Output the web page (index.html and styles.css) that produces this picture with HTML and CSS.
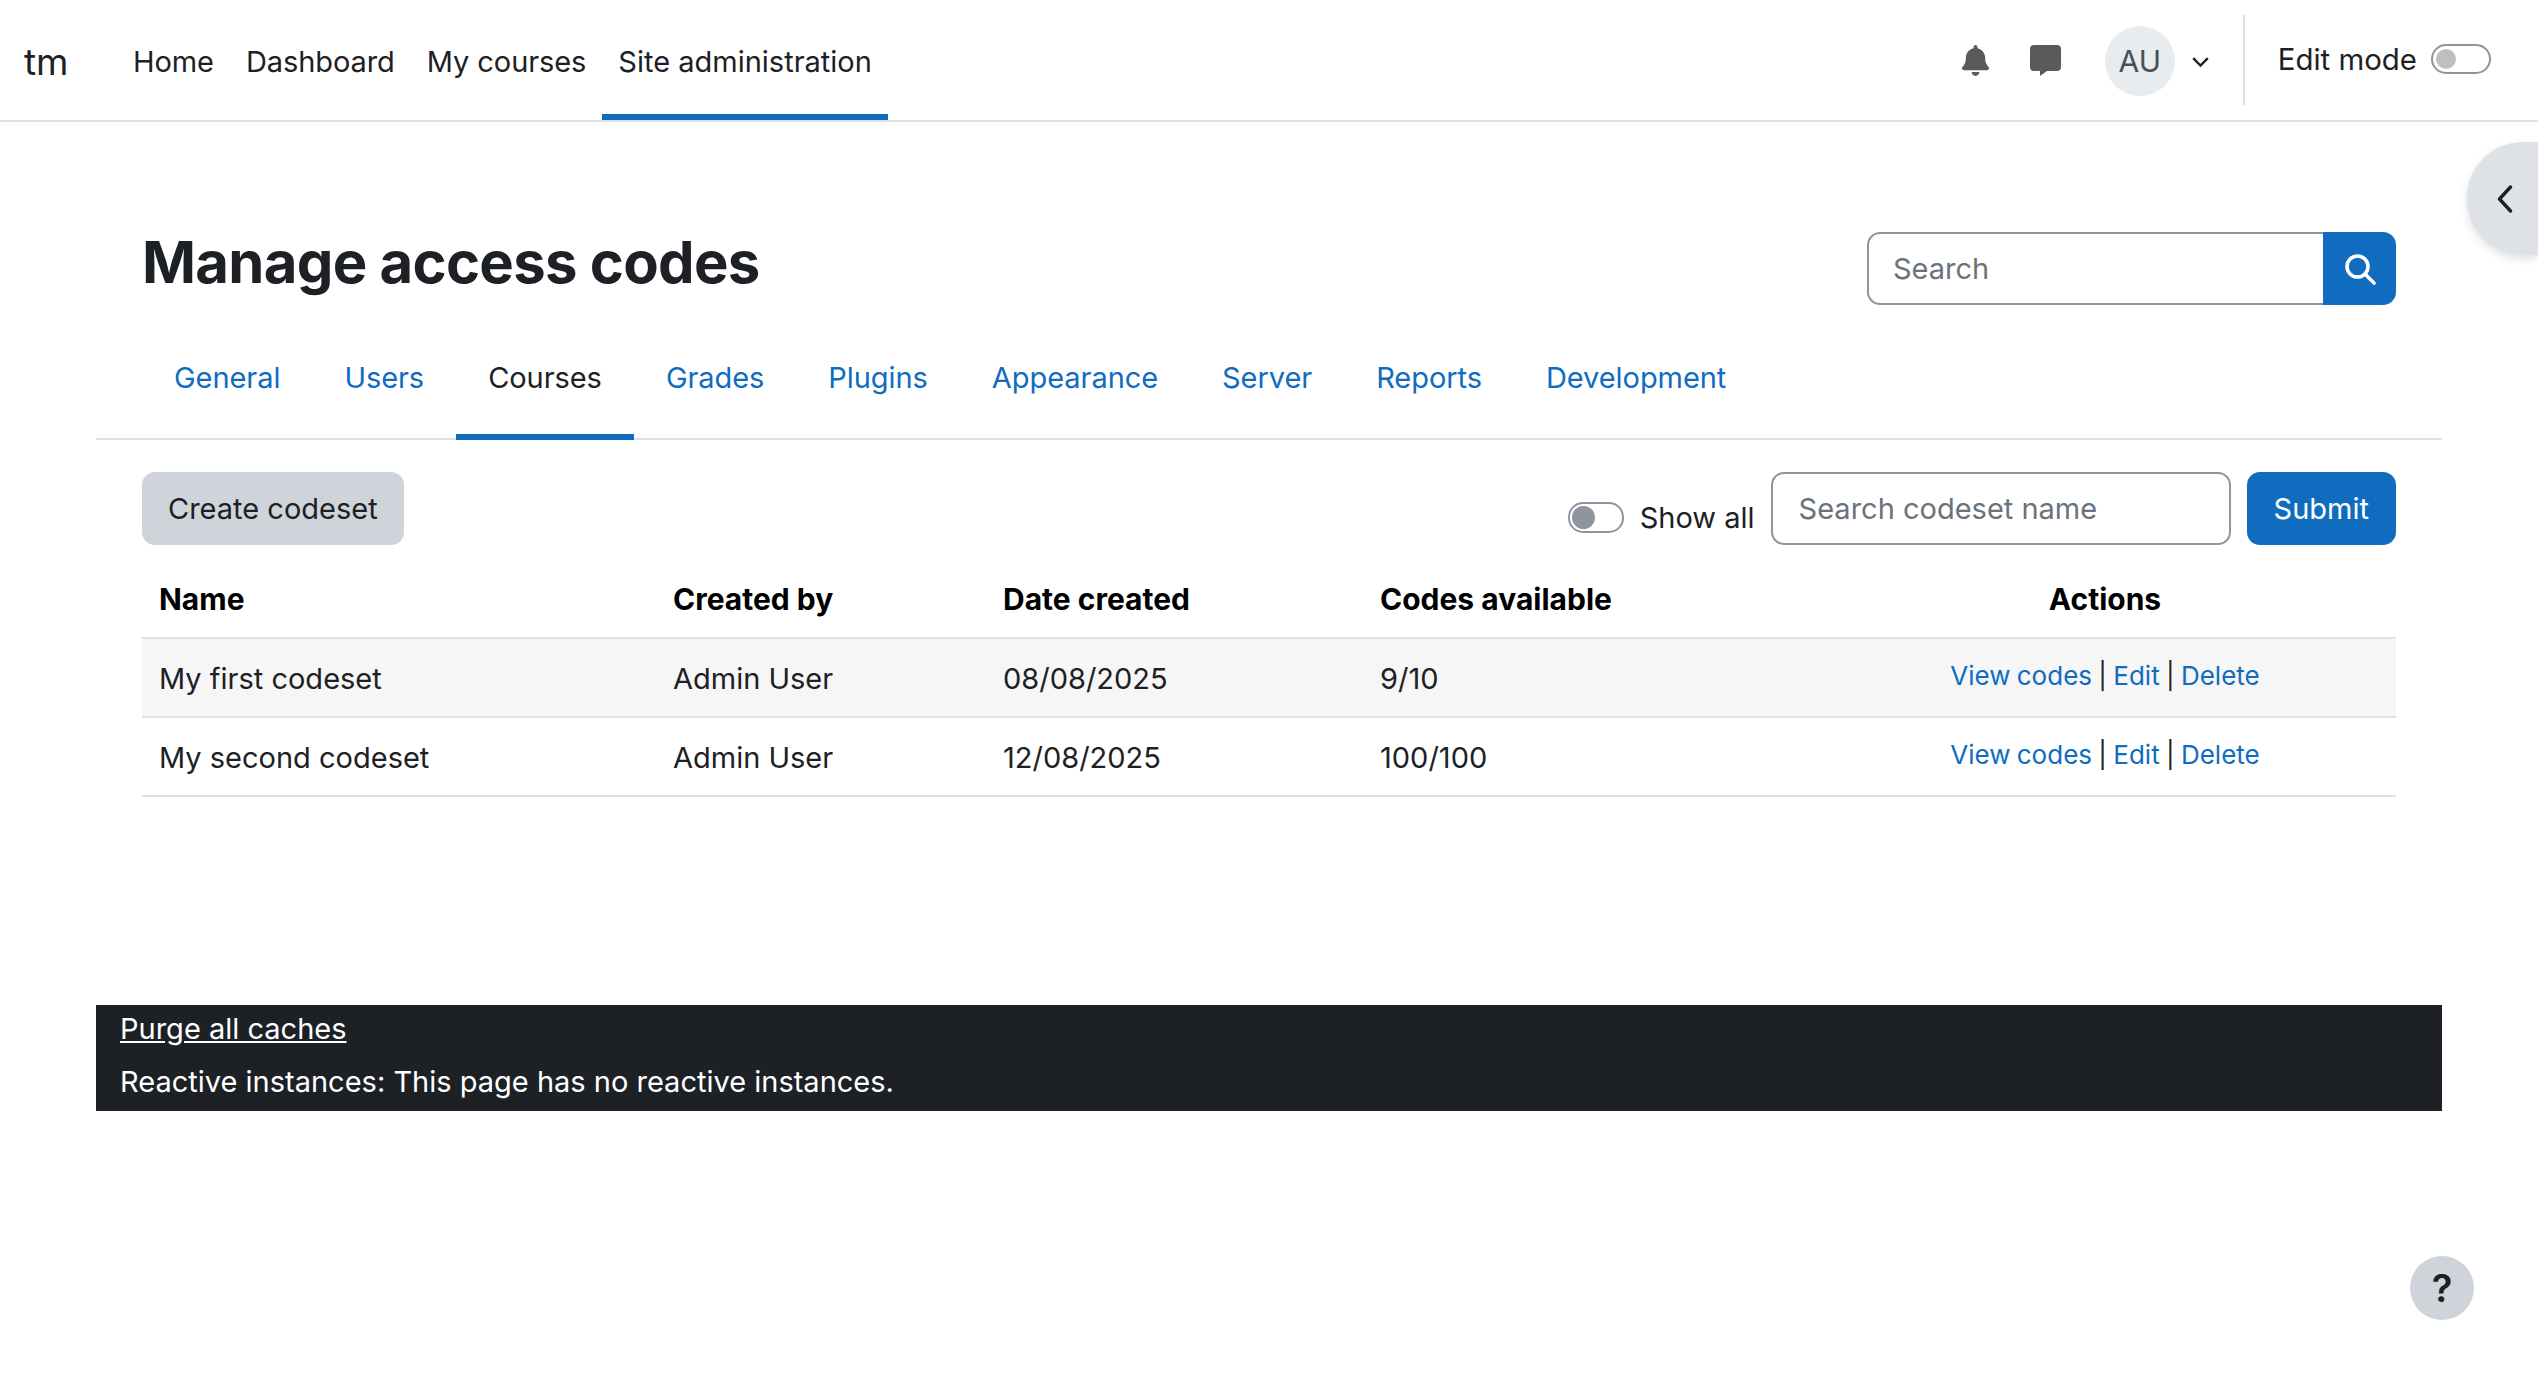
FILE: index.html
```html
<!DOCTYPE html>
<html lang="en">
<head>
  <meta charset="UTF-8">
  <meta name="viewport" content="width=device-width, initial-scale=1.0">
  <title>Manage access codes</title>
  <link rel="stylesheet" href="styles.css">
</head>
<body>
  <header class="navbar">
    <a class="brand" href="#">tm</a>
    <nav class="primary-nav">
      <a href="#">Home</a>
      <a href="#">Dashboard</a>
      <a href="#">My courses</a>
      <a href="#" class="active">Site administration</a>
    </nav>
    <div class="usernav">
      <svg class="icon-bell" viewBox="0 0 448 512" aria-hidden="true"><path d="M224 0c-17.7 0-32 14.3-32 32V51.2C119 66 64 130.6 64 208v18.8c0 47-17.3 92.4-48.5 127.6l-7.4 8.3c-8.4 9.4-10.4 22.9-5.3 34.4S19.4 416 32 416H416c12.6 0 24-7.4 29.2-18.9s3.1-25-5.3-34.4l-7.4-8.3C401.3 319.2 384 273.9 384 226.8V208c0-77.4-55-142-128-156.8V32c0-17.7-14.3-32-32-32zm45.3 493.3c12-12 18.7-28.3 18.7-45.3H224 160c0 17 6.7 33.3 18.7 45.3s28.3 18.7 45.3 18.7s33.3-6.7 45.3-18.7z"/></svg>
      <svg class="icon-chat" viewBox="0 0 31 31" aria-hidden="true"><path d="M4 0H27a4 4 0 0 1 4 4V22a4 4 0 0 1-4 4H17L10 31V26H4a4 4 0 0 1-4-4V4a4 4 0 0 1 4-4z"/></svg>
      <div class="avatar">AU</div>
      <svg class="icon-caret" viewBox="0 0 17 10" aria-hidden="true"><path d="M1.2 1.2L8.5 8.5L15.8 1.2"/></svg>
      <div class="nav-divider"></div>
      <span class="edit-label">Edit mode</span>
      <span class="switch"><span class="knob"></span></span>
    </div>
  </header>

  <main class="page">
    <div class="page-head">
      <h1>Manage access codes</h1>
      <form class="search-box">
        <input type="text" placeholder="Search">
        <button type="button" aria-label="Search">
          <svg viewBox="0 0 32 32" aria-hidden="true"><circle cx="13.5" cy="13.5" r="10.5"/><path d="M21 21L30 30"/></svg>
        </button>
      </form>
    </div>

    <nav class="tabs">
      <a href="#">General</a>
      <a href="#">Users</a>
      <a href="#" class="active">Courses</a>
      <a href="#">Grades</a>
      <a href="#">Plugins</a>
      <a href="#">Appearance</a>
      <a href="#">Server</a>
      <a href="#">Reports</a>
      <a href="#">Development</a>
    </nav>

    <section class="content">
      <div class="toolbar">
        <a class="btn btn-secondary" href="#">Create codeset</a>
        <div class="filters">
          <label class="show-all"><span class="switch switch-small"><span class="knob"></span></span>Show all</label>
          <input class="filter-input" type="text" placeholder="Search codeset name">
          <a class="btn btn-primary" href="#">Submit</a>
        </div>
      </div>

      <table class="codes">
        <thead>
          <tr>
            <th class="col-name">Name</th>
            <th class="col-by">Created by</th>
            <th class="col-date">Date created</th>
            <th class="col-avail">Codes available</th>
            <th class="col-actions">Actions</th>
          </tr>
        </thead>
        <tbody>
          <tr class="odd">
            <td>My first codeset</td>
            <td>Admin User</td>
            <td>08/08/2025</td>
            <td>9/10</td>
            <td class="actions"><a href="#">View codes</a> | <a href="#">Edit</a> | <a href="#">Delete</a></td>
          </tr>
          <tr>
            <td>My second codeset</td>
            <td>Admin User</td>
            <td>12/08/2025</td>
            <td>100/100</td>
            <td class="actions"><a href="#">View codes</a> | <a href="#">Edit</a> | <a href="#">Delete</a></td>
          </tr>
        </tbody>
      </table>
    </section>

    <footer class="debug-bar">
      <a href="#">Purge all caches</a>
      <p>Reactive instances: This page has no reactive instances.</p>
    </footer>
  </main>

  <button class="drawer-toggle" aria-label="Open drawer">
    <svg viewBox="0 0 16 28" aria-hidden="true"><path d="M13.5 2L2.5 14L13.5 26"/></svg>
  </button>
  <button class="help-btn" aria-label="Help">?</button>
</body>
</html>
```

FILE: styles.css
```css
:root {
  --color-primary: #0f6cbf;
  --color-text: #1d2125;
  --color-border: #dee2e6;
  --color-input: #8f959e;
  --color-muted: #6a737b;
}

* {
  margin: 0;
  padding: 0;
  box-sizing: border-box;
}

body {
  background: white;
  color: var(--color-text);
  font-family: Inter, "Noto Sans", sans-serif;
  font-size: 29px;
  line-height: 45px;
  position: relative;
  min-height: 100vh;
}

a {
  color: var(--color-primary);
  text-decoration: none;
}

/* top bar */
.navbar {
  display: flex;
  align-items: stretch;
  height: 122px;
  border-bottom: 2px solid var(--color-border);
}

.brand {
  color: var(--color-text);
  font-size: 37px;
  line-height: 124px;
  margin-left: 24px;
  width: 93px;
}

.primary-nav {
  display: flex;
  letter-spacing: -0.08px;
}

.primary-nav a {
  color: var(--color-text);
  padding: 39px 16px 0;
  height: 120px;
}

.primary-nav a.active {
  border-bottom: 6px solid var(--color-primary);
  letter-spacing: 0;
}

.usernav {
  margin-left: auto;
  display: flex;
  align-items: center;
  height: 120px;
}

.icon-bell {
  width: 27px;
  height: 31px;
  fill: #5a5a5a;
}

.icon-chat {
  width: 31px;
  height: 31px;
  fill: #5a5a5a;
  margin-left: 41px;
}

.avatar {
  width: 70px;
  height: 70px;
  border-radius: 50%;
  background: #e9ecef;
  color: #495057;
  font-size: 30px;
  display: flex;
  align-items: center;
  justify-content: center;
  margin-left: 44px;
  margin-top: 2px;
}

.icon-caret {
  width: 17px;
  height: 10px;
  margin-left: 17px;
  margin-top: 3px;
  fill: none;
  stroke: var(--color-text);
  stroke-width: 2.4;
}

.nav-divider {
  width: 2px;
  height: 90px;
  background: var(--color-border);
  margin-left: 34px;
}

.edit-label {
  font-size: 29.4px;
  margin-left: 33px;
  margin-top: -2px;
}

.switch {
  display: block;
  width: 60px;
  height: 30px;
  border: 2px solid var(--color-input);
  border-radius: 15px;
  margin-left: 14px;
  margin-right: 47px;
  margin-top: -3px;
  padding: 3px;
}

.knob {
  display: block;
  width: 20px;
  height: 20px;
  border-radius: 50%;
  background: #bfbfbf;
}

/* page header */
.page {
  padding: 0 96px;
}

.page-head {
  display: flex;
  justify-content: space-between;
  align-items: flex-start;
  padding: 110px 46px 0;
  height: 183px;
}

h1 {
  font-size: 58px;
  font-weight: 700;
  line-height: 60px;
  letter-spacing: -0.7px;
}

.search-box {
  display: flex;
  width: 529px;
  height: 73px;
}

.search-box input {
  flex: 1;
  min-width: 0;
  border: 2px solid var(--color-input);
  border-right: none;
  border-radius: 13px 0 0 13px;
  padding: 0 24px;
  font: inherit;
  color: var(--color-text);
}

input::placeholder {
  color: var(--color-muted);
  opacity: 1;
}

.search-box button {
  width: 73px;
  border: none;
  border-radius: 0 13px 13px 0;
  background: var(--color-primary);
  display: flex;
  align-items: center;
  justify-content: center;
}

.search-box svg {
  width: 32px;
  height: 32px;
  fill: none;
  stroke: white;
  stroke-width: 3.6;
  stroke-linecap: round;
}

/* tabs */
.tabs {
  display: flex;
  padding: 0 46px;
  border-bottom: 2px solid var(--color-border);
  height: 135px;
  letter-spacing: -0.06px;
}

.tabs a {
  padding: 50px 32px 0;
  height: 135px;
}

.tabs a.active {
  color: var(--color-text);
  border-bottom: 6px solid var(--color-primary);
}

/* content */
.content {
  padding: 32px 46px 0;
}

.toolbar {
  display: flex;
  justify-content: space-between;
}

.btn {
  display: block;
  height: 73px;
  line-height: 73px;
  padding: 0 26px;
  border-radius: 13px;
}

.btn-secondary {
  background: #ced4da;
  color: var(--color-text);
}

.btn-primary {
  background: var(--color-primary);
  color: white;
  padding: 0 27px;
}

.filters {
  display: flex;
  gap: 16px;
}

.show-all {
  display: flex;
  align-items: center;
  height: 45px;
  margin-top: 23px;
}

.switch-small {
  width: 56px;
  height: 31px;
  margin: 0 16px 0 0;
  padding: 2px;
}

.switch-small .knob {
  width: 23px;
  height: 23px;
  background: #8f959e;
}

.filter-input {
  width: 460px;
  height: 73px;
  border: 2px solid var(--color-input);
  border-radius: 13px;
  padding: 0 26px;
  font: inherit;
}

.codes {
  width: 100%;
  table-layout: fixed;
  border-collapse: collapse;
}

.codes th {
  text-align: left;
  font-size: 30px;
  font-weight: 700;
  color: black;
  padding: 32px 17px 15px;
  border-bottom: 2px solid var(--color-border);
}

.codes td {
  padding: 17px 17px 15px;
  border-bottom: 2px solid var(--color-border);
}

.codes tr.odd td {
  background: #f6f6f6;
}

.col-name { width: 514px; }
.col-by { width: 330px; }
.col-date { width: 377px; }
.col-avail { width: 451px; }

.codes th.col-actions {
  text-align: center;
}

.codes td.actions {
  text-align: center;
  font-size: 26px;
  word-spacing: -1px;
  padding-top: 14px;
  padding-bottom: 18px;
}

/* debug strip */
.debug-bar {
  margin-top: 208px;
  background: var(--color-text);
  color: white;
  padding: 1px 24px 7px;
}

.debug-bar a {
  color: white;
  text-decoration: underline;
  display: block;
  margin-bottom: 8px;
}

/* floating buttons */
.drawer-toggle {
  position: absolute;
  top: 142px;
  right: 0;
  width: 71px;
  height: 113px;
  border: none;
  border-radius: 56px 0 0 56px;
  background: var(--color-border);
  box-shadow: 0 4px 10px rgba(0, 0, 0, 0.12);
}

.drawer-toggle svg {
  width: 16px;
  height: 28px;
  fill: none;
  stroke: var(--color-text);
  stroke-width: 3.4;
  stroke-linecap: round;
  stroke-linejoin: round;
  position: absolute;
  left: 30px;
  top: 43px;
}

.help-btn {
  position: absolute;
  left: 2410px;
  top: 1256px;
  width: 64px;
  height: 64px;
  border: none;
  border-radius: 50%;
  background: #ced4da;
  color: var(--color-text);
  font-family: inherit;
  font-size: 38px;
  font-weight: 600;
}
```
